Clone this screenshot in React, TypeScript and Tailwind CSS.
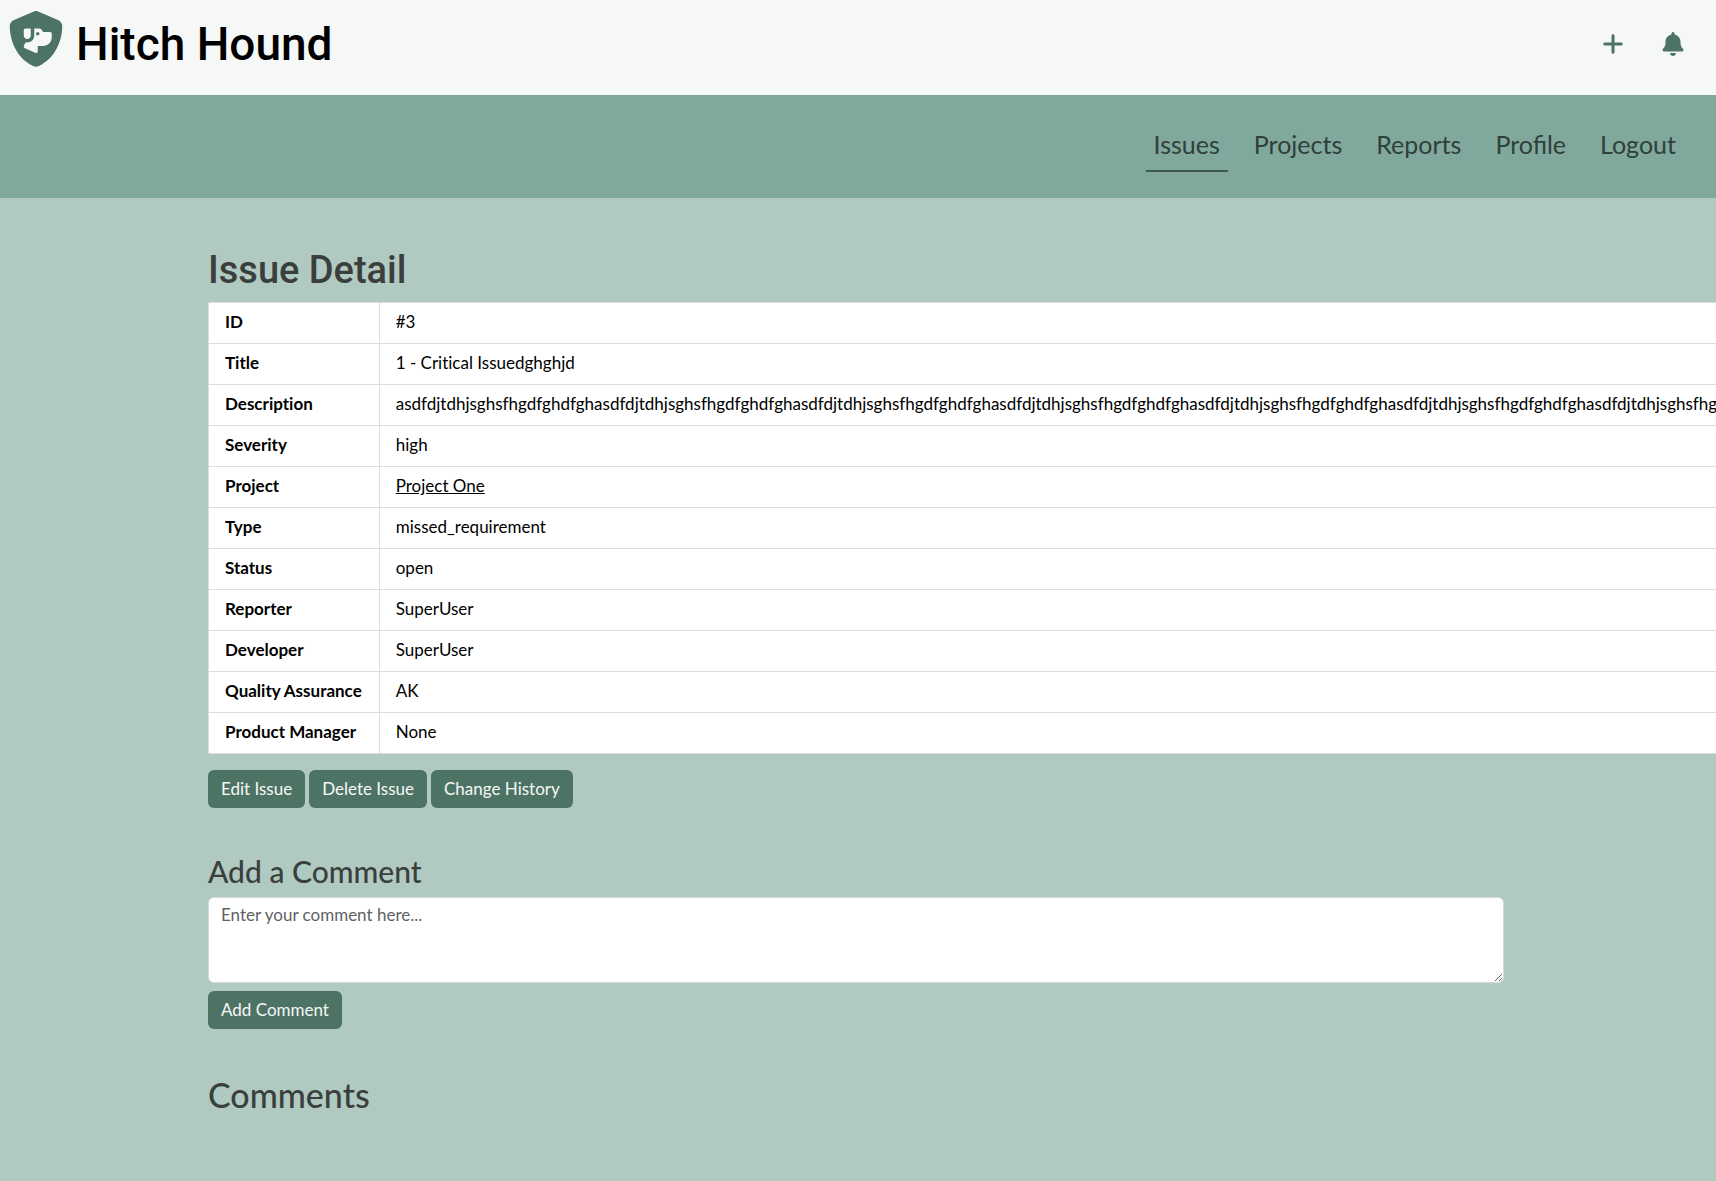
import React from "react";
import { FaBell, FaPlus, FaShieldDog } from "react-icons/fa6";

const navItems = ["Issues", "Projects", "Reports", "Profile", "Logout"];

const description = "asdfdjtdhjsghsfhgdfghdfgh".repeat(12);

const rows: { label: string; value: React.ReactNode }[] = [
  { label: "ID", value: "#3" },
  { label: "Title", value: "1 - Critical Issuedghghjd" },
  { label: "Description", value: description },
  { label: "Severity", value: "high" },
  {
    label: "Project",
    value: (
      <a href="#project" className="underline">
        Project One
      </a>
    ),
  },
  { label: "Type", value: "missed_requirement" },
  { label: "Status", value: "open" },
  { label: "Reporter", value: "SuperUser" },
  { label: "Developer", value: "SuperUser" },
  { label: "Quality Assurance", value: "AK" },
  { label: "Product Manager", value: "None" },
];

function ActionButton({ children }: { children: React.ReactNode }) {
  return (
    <button
      type="button"
      className="h-[38px] rounded-md bg-[#4d7365] px-[13px] pb-px text-[17px] leading-6 text-[#f6f8f7]"
    >
      {children}
    </button>
  );
}

function Header() {
  return (
    <header className="flex h-[95px] items-start justify-between bg-[#f6f8f7] pl-2">
      <a href="#home" className="flex items-start gap-3 pt-[11px] text-black">
        <FaShieldDog className="size-14 text-[#4d7365]" aria-hidden="true" />
        <span className="font-['Roboto',sans-serif] text-[46px] leading-[66px] font-medium">
          Hitch Hound
        </span>
      </a>
      <div className="flex gap-9 pt-8 pr-[31px] text-2xl text-[#4d7365]">
        <button type="button" aria-label="New issue">
          <FaPlus />
        </button>
        <button type="button" aria-label="Notifications">
          <FaBell />
        </button>
      </div>
    </header>
  );
}

function NavBar() {
  return (
    <nav className="flex h-[103px] items-center justify-end gap-[18px] bg-[#81a89c] px-8">
      {navItems.map((item, i) => (
        <a
          key={item}
          href={"#" + item.toLowerCase()}
          aria-current={i === 0 ? "page" : undefined}
          className={
            i === 0
              ? "border-b-2 border-[#3f5850] px-2 py-1 pt-0.5 pb-1.5 text-[25px] leading-10 text-[#2f403a]"
              : "border-b-2 border-transparent px-2 pt-0.5 pb-1.5 text-[25px] leading-10 text-[#2f403a]"
          }
        >
          {item}
        </a>
      ))}
    </nav>
  );
}

export default function App() {
  return (
    <div className="min-h-screen overflow-x-hidden bg-[#b0cac1] font-['Lato',sans-serif] text-[17px] leading-6 text-black">
      <Header />
      <NavBar />
      <main className="pr-1">
        <div className="mx-auto max-w-[1320px] px-3 pt-12 pb-16">
          <h1 className="mb-2 font-['Roboto',sans-serif] text-[38px] leading-12 font-medium text-[#3a3f3d]">
            Issue Detail
          </h1>
          <table className="border-collapse bg-white [font-variant-ligatures:none]">
            <tbody>
              {rows.map((row) => (
                <tr key={row.label}>
                  <th
                    scope="row"
                    className="border border-[#dadde1] pt-[7px] pr-[17px] pb-[9px] pl-4 text-left font-bold whitespace-nowrap"
                  >
                    {row.label}
                  </th>
                  <td className="border border-[#dadde1] px-4 pt-[7px] pb-[9px] whitespace-nowrap">
                    {row.value}
                  </td>
                </tr>
              ))}
            </tbody>
          </table>
          <div className="mt-4 flex gap-1">
            <ActionButton>Edit Issue</ActionButton>
            <ActionButton>Delete Issue</ActionButton>
            <ActionButton>Change History</ActionButton>
          </div>

          <h2
            id="add-comment"
            className="mt-[47px] mb-[9px] text-[30px] leading-[33px] font-medium text-[#3a3f3d]"
          >
            Add a Comment
          </h2>
          <textarea
            aria-labelledby="add-comment"
            rows={3}
            placeholder="Enter your comment here..."
            className="block h-[86px] w-full rounded-md border border-[#d7dbdd] bg-white px-3 py-[5px] placeholder:text-[#5f6265]"
          />
          <div className="mt-2">
            <ActionButton>Add Comment</ActionButton>
          </div>

          <h2 className="mt-[47px] text-[34px] leading-[38px] font-medium text-[#3a3f3d]">Comments</h2>
        </div>
      </main>
    </div>
  );
}
